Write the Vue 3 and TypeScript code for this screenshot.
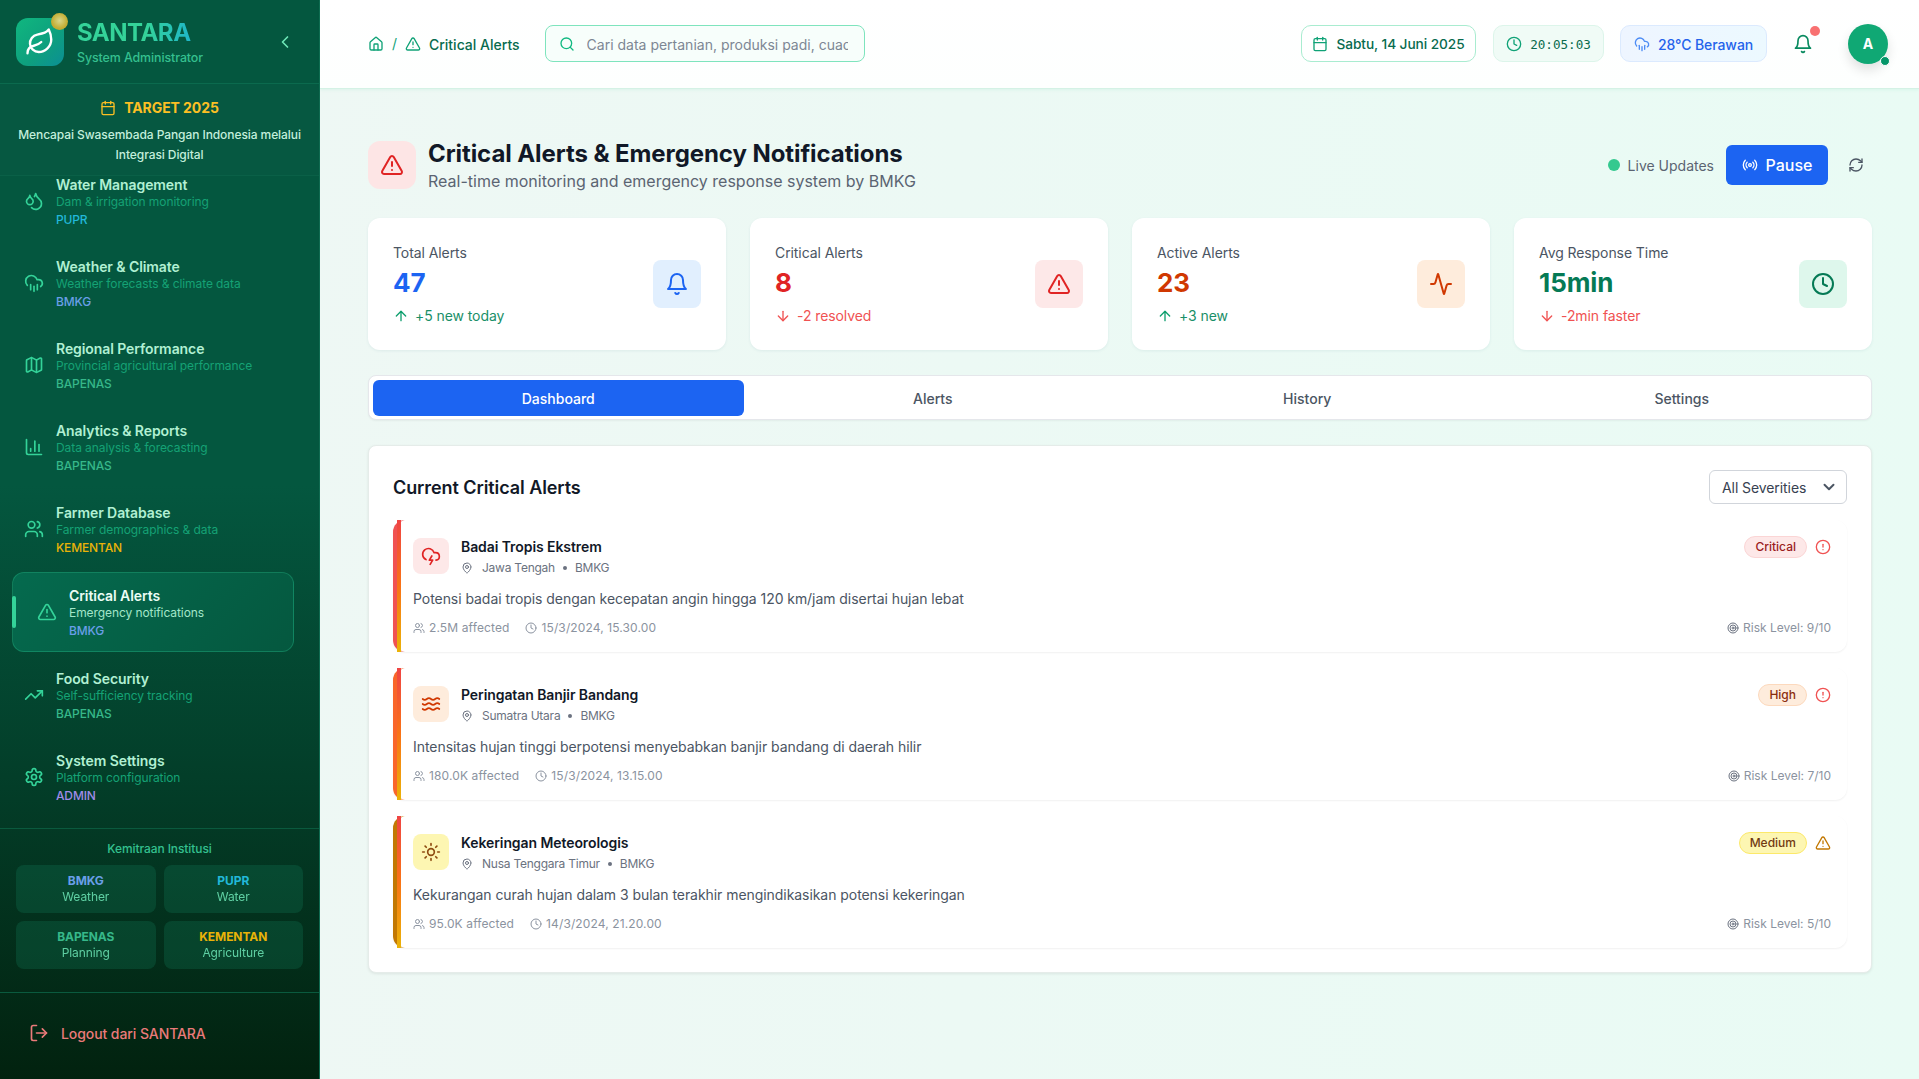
<script setup lang="ts">
const icons: Record<string, string> = {
  home: '<path d="M15 21v-8a1 1 0 0 0-1-1h-4a1 1 0 0 0-1 1v8"/><path d="M3 10a2 2 0 0 1 .709-1.528l7-5.999a2 2 0 0 1 2.582 0l7 5.999A2 2 0 0 1 21 10v9a2 2 0 0 1-2 2H5a2 2 0 0 1-2-2z"/>',
  alert: '<path d="m21.73 18-8-14a2 2 0 0 0-3.48 0l-8 14A2 2 0 0 0 4 21h16a2 2 0 0 0 1.73-3"/><path d="M12 9v4"/><path d="M12 17h.01"/>',
  search: '<circle cx="11" cy="11" r="8"/><path d="m21 21-4.3-4.3"/>',
  calendar: '<path d="M8 2v4"/><path d="M16 2v4"/><rect x="3" y="4" width="18" height="18" rx="2"/><path d="M3 10h18"/>',
  clock: '<circle cx="12" cy="12" r="10"/><polyline points="12 6 12 12 16 14"/>',
  rain: '<path d="M4 14.899A7 7 0 1 1 15.71 8h1.79a4.5 4.5 0 0 1 2.5 8.242"/><path d="M16 14v6"/><path d="M8 14v6"/><path d="M12 16v6"/>',
  bell: '<path d="M6 8a6 6 0 0 1 12 0c0 7 3 9 3 9H3s3-2 3-9"/><path d="M10.3 21a1.94 1.94 0 0 0 3.4 0"/>',
  radio: '<path d="M4.9 19.1C1 15.2 1 8.8 4.9 4.9"/><path d="M7.8 16.2c-2.3-2.3-2.3-6.1 0-8.5"/><circle cx="12" cy="12" r="2"/><path d="M16.2 7.8c2.3 2.3 2.3 6.1 0 8.5"/><path d="M19.1 4.9C23 8.8 23 15.1 19.1 19"/>',
  refresh: '<path d="M3 12a9 9 0 0 1 9-9 9.75 9.75 0 0 1 6.74 2.74L21 8"/><path d="M21 3v5h-5"/><path d="M21 12a9 9 0 0 1-9 9 9.75 9.75 0 0 1-6.74-2.74L3 16"/><path d="M8 16H3v5"/>',
  up: '<path d="m5 12 7-7 7 7"/><path d="M12 19V5"/>',
  down: '<path d="M12 5v14"/><path d="m19 12-7 7-7-7"/>',
  activity: '<path d="M22 12h-2.48a2 2 0 0 0-1.93 1.46l-2.35 8.36a.25.25 0 0 1-.48 0L9.24 2.18a.25.25 0 0 0-.48 0l-2.35 8.36A2 2 0 0 1 4.49 12H2"/>',
  leaf: '<path d="M11 20A7 7 0 0 1 9.8 6.1C15.5 5 17 4.48 19 2c1 2 2 4.18 2 8 0 5.5-4.78 10-10 10Z"/><path d="M2 21c0-3 1.85-5.36 5.08-6C9.5 14.52 12 13 13 12"/>',
  left: '<path d="m15 18-6-6 6-6"/>',
  chevron: '<path d="m6 9 6 6 6-6"/>',
  droplets: '<path d="M7 16.3c2.2 0 4-1.83 4-4.05 0-1.16-.57-2.26-1.71-3.19S7.29 6.75 7 5.3c-.29 1.45-1.14 2.84-2.29 3.76S3 11.1 3 12.25c0 2.22 1.8 4.05 4 4.05z"/><path d="M12.56 6.6A10.97 10.97 0 0 0 14 3.02c.5 2.5 2 4.9 4 6.5s3 3.5 3 5.5a6.98 6.98 0 0 1-11.91 4.97"/>',
  map: '<path d="M14.106 5.553a2 2 0 0 0 1.788 0l3.659-1.83A1 1 0 0 1 21 4.619v12.764a1 1 0 0 1-.553.894l-4.553 2.277a2 2 0 0 1-1.788 0l-4.212-2.106a2 2 0 0 0-1.788 0l-3.659 1.83A1 1 0 0 1 3 19.381V6.618a1 1 0 0 1 .553-.894l4.553-2.277a2 2 0 0 1 1.788 0z"/><path d="M15 5.764v15"/><path d="M9 3.236v15"/>',
  chart: '<path d="M3 3v16a2 2 0 0 0 2 2h16"/><path d="M18 17V9"/><path d="M13 17V5"/><path d="M8 17v-3"/>',
  users: '<path d="M16 21v-2a4 4 0 0 0-4-4H6a4 4 0 0 0-4 4v2"/><path d="M16 3.128a4 4 0 0 1 0 7.744"/><path d="M22 21v-2a4 4 0 0 0-3-3.87"/><circle cx="9" cy="7" r="4"/>',
  trending: '<polyline points="22 7 13.5 15.5 8.5 10.5 2 17"/><polyline points="16 7 22 7 22 13"/>',
  settings: '<path d="M12.22 2h-.44a2 2 0 0 0-2 2v.18a2 2 0 0 1-1 1.73l-.43.25a2 2 0 0 1-2 0l-.15-.08a2 2 0 0 0-2.73.73l-.22.38a2 2 0 0 0 .73 2.73l.15.1a2 2 0 0 1 1 1.72v.51a2 2 0 0 1-1 1.74l-.15.09a2 2 0 0 0-.73 2.73l.22.38a2 2 0 0 0 2.73.73l.15-.08a2 2 0 0 1 2 0l.43.25a2 2 0 0 1 1 1.73V20a2 2 0 0 0 2 2h.44a2 2 0 0 0 2-2v-.18a2 2 0 0 1 1-1.73l.43-.25a2 2 0 0 1 2 0l.15.08a2 2 0 0 0 2.73-.73l.22-.39a2 2 0 0 0-.73-2.73l-.15-.08a2 2 0 0 1-1-1.74v-.5a2 2 0 0 1 1-1.74l.15-.09a2 2 0 0 0 .73-2.73l-.22-.38a2 2 0 0 0-2.73-.73l-.15.08a2 2 0 0 1-2 0l-.43-.25a2 2 0 0 1-1-1.73V4a2 2 0 0 0-2-2z"/><circle cx="12" cy="12" r="3"/>',
  logout: '<path d="M9 21H5a2 2 0 0 1-2-2V5a2 2 0 0 1 2-2h4"/><polyline points="16 17 21 12 16 7"/><line x1="21" y1="12" x2="9" y2="12"/>',
  lightning: '<path d="M6 16.326A7 7 0 1 1 15.71 8h1.79a4.5 4.5 0 0 1 .5 8.973"/><path d="m13 12-3 5h4l-3 5"/>',
  waves: '<path d="M2 6c.6.5 1.2 1 2.5 1C7 7 7 5 9.5 5c2.6 0 2.4 2 5 2 2.5 0 2.5-2 5-2 1.3 0 1.9.5 2.5 1"/><path d="M2 12c.6.5 1.2 1 2.5 1 2.5 0 2.5-2 5-2 2.6 0 2.4 2 5 2 2.5 0 2.5-2 5-2 1.3 0 1.9.5 2.5 1"/><path d="M2 18c.6.5 1.2 1 2.5 1 2.5 0 2.5-2 5-2 2.6 0 2.4 2 5 2 2.5 0 2.5-2 5-2 1.3 0 1.9.5 2.5 1"/>',
  sun: '<circle cx="12" cy="12" r="4"/><path d="M12 2v2"/><path d="M12 20v2"/><path d="m4.93 4.93 1.41 1.41"/><path d="m17.66 17.66 1.41 1.41"/><path d="M2 12h2"/><path d="M20 12h2"/><path d="m6.34 17.66-1.41 1.41"/><path d="m19.07 4.93-1.41 1.41"/>',
  pin: '<path d="M20 10c0 4.993-5.539 10.193-7.399 11.799a1 1 0 0 1-1.202 0C9.539 20.193 4 14.993 4 10a8 8 0 0 1 16 0"/><circle cx="12" cy="10" r="3"/>',
  circleAlert: '<circle cx="12" cy="12" r="10"/><line x1="12" y1="8" x2="12" y2="12"/><line x1="12" y1="16" x2="12.01" y2="16"/>',
  target: '<circle cx="12" cy="12" r="10"/><circle cx="12" cy="12" r="6"/><circle cx="12" cy="12" r="2"/>',
}

const navItems = [
  { title: 'Water Management', sub: 'Dam & irrigation monitoring', tag: 'PUPR', icon: 'droplets', tone: 'cyan' },
  { title: 'Weather & Climate', sub: 'Weather forecasts & climate data', tag: 'BMKG', icon: 'rain', tone: 'blue' },
  { title: 'Regional Performance', sub: 'Provincial agricultural performance', tag: 'BAPENAS', icon: 'map', tone: 'green' },
  { title: 'Analytics & Reports', sub: 'Data analysis & forecasting', tag: 'BAPENAS', icon: 'chart', tone: 'green' },
  { title: 'Farmer Database', sub: 'Farmer demographics & data', tag: 'KEMENTAN', icon: 'users', tone: 'yellow' },
  { title: 'Critical Alerts', sub: 'Emergency notifications', tag: 'BMKG', icon: 'alert', tone: 'blue', active: true },
  { title: 'Food Security', sub: 'Self-sufficiency tracking', tag: 'BAPENAS', icon: 'trending', tone: 'green' },
  { title: 'System Settings', sub: 'Platform configuration', tag: 'ADMIN', icon: 'settings', tone: 'purple' },
]

const partners = [
  { name: 'BMKG', role: 'Weather', tone: 'blue' },
  { name: 'PUPR', role: 'Water', tone: 'cyan' },
  { name: 'BAPENAS', role: 'Planning', tone: 'green' },
  { name: 'KEMENTAN', role: 'Agriculture', tone: 'yellow' },
]

const stats = [
  { label: 'Total Alerts', value: '47', change: '+5 new today', dir: 'up', icon: 'bell', tone: 'blue' },
  { label: 'Critical Alerts', value: '8', change: '-2 resolved', dir: 'down', icon: 'alert', tone: 'red' },
  { label: 'Active Alerts', value: '23', change: '+3 new', dir: 'up', icon: 'activity', tone: 'orange' },
  { label: 'Avg Response Time', value: '15min', change: '-2min faster', dir: 'down', icon: 'clock', tone: 'green' },
]

const tabs = ['Dashboard', 'Alerts', 'History', 'Settings']

const alerts = [
  {
    title: 'Badai Tropis Ekstrem', place: 'Jawa Tengah', source: 'BMKG',
    text: 'Potensi badai tropis dengan kecepatan angin hingga 120 km/jam disertai hujan lebat',
    affected: '2.5M affected', time: '15/3/2024, 15.30.00', risk: 'Risk Level: 9/10',
    level: 'Critical', tone: 'red', icon: 'lightning', status: 'circleAlert',
  },
  {
    title: 'Peringatan Banjir Bandang', place: 'Sumatra Utara', source: 'BMKG',
    text: 'Intensitas hujan tinggi berpotensi menyebabkan banjir bandang di daerah hilir',
    affected: '180.0K affected', time: '15/3/2024, 13.15.00', risk: 'Risk Level: 7/10',
    level: 'High', tone: 'orange', icon: 'waves', status: 'circleAlert',
  },
  {
    title: 'Kekeringan Meteorologis', place: 'Nusa Tenggara Timur', source: 'BMKG',
    text: 'Kekurangan curah hujan dalam 3 bulan terakhir mengindikasikan potensi kekeringan',
    affected: '95.0K affected', time: '14/3/2024, 21.20.00', risk: 'Risk Level: 5/10',
    level: 'Medium', tone: 'yellow', icon: 'sun', status: 'alert',
  },
]
</script>

<template>
  <div class="app">
    <aside class="sidebar">
      <div class="brand">
        <div class="logo">
          <svg class="ic leaf" viewBox="0 0 24 24" v-html="icons.leaf"></svg>
          <span class="logo-dot"></span>
        </div>
        <div class="brand-text">
          <div class="brand-name">SANTARA</div>
          <div class="brand-role">System Administrator</div>
        </div>
        <svg class="ic collapse" viewBox="0 0 24 24" v-html="icons.left"></svg>
      </div>

      <div class="target">
        <div class="target-head">
          <svg class="ic" viewBox="0 0 24 24" v-html="icons.calendar"></svg>
          <span>TARGET 2025</span>
        </div>
        <p>Mencapai Swasembada Pangan Indonesia melalui Integrasi Digital</p>
      </div>

      <nav class="nav">
        <div class="nav-list">
          <a v-for="item in navItems" :key="item.title" class="nav-item" :class="{ active: item.active }">
            <span v-if="item.active" class="nav-bar"></span>
            <svg class="ic nav-icon" viewBox="0 0 24 24" v-html="icons[item.icon]"></svg>
            <span class="nav-text">
              <span class="nav-title">{{ item.title }}</span>
              <span class="nav-sub">{{ item.sub }}</span>
              <span class="nav-tag" :class="item.tone">{{ item.tag }}</span>
            </span>
          </a>
        </div>
      </nav>

      <div class="partners">
        <div class="partners-label">Kemitraan Institusi</div>
        <div class="partner-grid">
          <div v-for="p in partners" :key="p.name" class="partner">
            <span class="partner-name" :class="p.tone">{{ p.name }}</span>
            <span class="partner-role">{{ p.role }}</span>
          </div>
        </div>
      </div>

      <div class="logout">
        <svg class="ic" viewBox="0 0 24 24" v-html="icons.logout"></svg>
        <span>Logout dari SANTARA</span>
      </div>
    </aside>

    <div class="main">
      <header class="topbar">
        <div class="crumbs">
          <svg class="ic" viewBox="0 0 24 24" v-html="icons.home"></svg>
          <span class="slash">/</span>
          <svg class="ic" viewBox="0 0 24 24" v-html="icons.alert"></svg>
          <span class="crumb-now">Critical Alerts</span>
        </div>
        <div class="search">
          <svg class="ic" viewBox="0 0 24 24" v-html="icons.search"></svg>
          <input type="text" placeholder="Cari data pertanian, produksi padi, cuaca..." />
        </div>
        <div class="top-right">
          <div class="pill date">
            <svg class="ic" viewBox="0 0 24 24" v-html="icons.calendar"></svg>
            <span>Sabtu, 14 Juni 2025</span>
          </div>
          <div class="pill time">
            <svg class="ic" viewBox="0 0 24 24" v-html="icons.clock"></svg>
            <span>20:05:03</span>
          </div>
          <div class="pill weather">
            <svg class="ic" viewBox="0 0 24 24" v-html="icons.rain"></svg>
            <span>28°C Berawan</span>
          </div>
          <div class="bell">
            <svg class="ic" viewBox="0 0 24 24" v-html="icons.bell"></svg>
            <span class="bell-dot"></span>
          </div>
          <div class="avatar">A<span class="avatar-dot"></span></div>
        </div>
      </header>

      <main class="content">
        <section class="page-head">
          <div class="page-icon">
            <svg class="ic" viewBox="0 0 24 24" v-html="icons.alert"></svg>
          </div>
          <div class="page-title">
            <h1>Critical Alerts &amp; Emergency Notifications</h1>
            <p>Real-time monitoring and emergency response system by BMKG</p>
          </div>
          <div class="page-actions">
            <span class="live-dot"></span>
            <span class="live-label">Live Updates</span>
            <button class="pause">
              <svg class="ic" viewBox="0 0 24 24" v-html="icons.radio"></svg>
              Pause
            </button>
            <svg class="ic refresh" viewBox="0 0 24 24" v-html="icons.refresh"></svg>
          </div>
        </section>

        <section class="stats">
          <div v-for="s in stats" :key="s.label" class="stat">
            <div class="stat-body">
              <div class="stat-label">{{ s.label }}</div>
              <div class="stat-value" :class="s.tone">{{ s.value }}</div>
              <div class="stat-change" :class="s.dir">
                <svg class="ic" viewBox="0 0 24 24" v-html="icons[s.dir]"></svg>
                <span>{{ s.change }}</span>
              </div>
            </div>
            <div class="stat-icon" :class="s.tone">
              <svg class="ic" viewBox="0 0 24 24" v-html="icons[s.icon]"></svg>
            </div>
          </div>
        </section>

        <section class="tabs">
          <button v-for="(t, i) in tabs" :key="t" class="tab" :class="{ on: i === 0 }">{{ t }}</button>
        </section>

        <section class="panel">
          <div class="panel-head">
            <h2>Current Critical Alerts</h2>
            <div class="select">
              <span>All Severities</span>
              <svg class="ic" viewBox="0 0 24 24" v-html="icons.chevron"></svg>
            </div>
          </div>
          <div class="alert-list">
            <article v-for="a in alerts" :key="a.title" class="alert" :class="a.tone">
              <div class="alert-top">
                <div class="alert-icon">
                  <svg class="ic" viewBox="0 0 24 24" v-html="icons[a.icon]"></svg>
                </div>
                <div class="alert-head">
                  <h3>{{ a.title }}</h3>
                  <div class="alert-place">
                    <svg class="ic" viewBox="0 0 24 24" v-html="icons.pin"></svg>
                    <span>{{ a.place }}</span>
                    <span class="sep"></span>
                    <span>{{ a.source }}</span>
                  </div>
                </div>
                <div class="alert-level">
                  <span class="badge">{{ a.level }}</span>
                  <svg class="ic status" viewBox="0 0 24 24" v-html="icons[a.status]"></svg>
                </div>
              </div>
              <p class="alert-text">{{ a.text }}</p>
              <div class="alert-meta">
                <span class="meta">
                  <svg class="ic" viewBox="0 0 24 24" v-html="icons.users"></svg>{{ a.affected }}
                </span>
                <span class="meta">
                  <svg class="ic" viewBox="0 0 24 24" v-html="icons.clock"></svg>{{ a.time }}
                </span>
                <span class="meta risk">
                  <svg class="ic" viewBox="0 0 24 24" v-html="icons.target"></svg>{{ a.risk }}
                </span>
              </div>
            </article>
          </div>
        </section>
      </main>
    </div>
  </div>
</template>

<style>
html,
body {
  margin: 0;
  padding: 0;
}
</style>

<style scoped>
.app {
  display: flex;
  height: 1079px;
  overflow: hidden;
  font-family: Inter, "Noto Sans", sans-serif;
  letter-spacing: -0.005em;
  background: linear-gradient(90deg, #eff7f4, #e9fbf4);
}

.ic {
  width: 16px;
  height: 16px;
  flex: none;
  fill: none;
  stroke: currentColor;
  stroke-width: 2;
  stroke-linecap: round;
  stroke-linejoin: round;
}

/* sidebar */
.sidebar {
  width: 320px;
  flex: none;
  display: flex;
  flex-direction: column;
  height: 100%;
  box-sizing: border-box;
  border-right: 1px solid #0f6a50;
  background: linear-gradient(180deg, #04573f 0%, #04573f 45%, #033e29 72%, #02220f 100%);
}

.brand {
  height: 84px;
  box-sizing: border-box;
  display: flex;
  align-items: center;
  padding: 0 16px;
  gap: 13px;
  border-bottom: 1px solid #0b6a4e;
}

.logo {
  position: relative;
  width: 48px;
  height: 48px;
  border-radius: 12px;
  display: flex;
  align-items: center;
  justify-content: center;
  color: #fff;
  background: linear-gradient(135deg, #10b77f, #0e9f7e 60%, #0b8f96);
}

.leaf {
  width: 30px;
  height: 30px;
  stroke-width: 1.9;
}

.logo-dot {
  position: absolute;
  top: -5px;
  right: -4px;
  width: 17px;
  height: 17px;
  border-radius: 50%;
  background: radial-gradient(circle at 50% 45%, #d9d78a 0%, #c4ae35 60%, #b99f2b 100%);
}

.brand-text {
  flex: 1;
  margin-top: 1px;
}

.brand-name {
  font-size: 24px;
  line-height: 30px;
  font-weight: 700;
  letter-spacing: -0.5px;
  width: fit-content;
  background: linear-gradient(90deg, #34d399 60%, #1fb6c9);
  -webkit-background-clip: text;
  background-clip: text;
  color: transparent;
}

.brand-role {
  font-size: 12.4px;
  line-height: 18px;
  margin-top: 1px;
  font-weight: 500;
  color: #35c08f;
}

.collapse {
  width: 20px;
  height: 20px;
  color: #6ee7b7;
  margin-right: 8px;
}

.target {
  height: 92px;
  box-sizing: border-box;
  padding: 14px 16px 0;
  flex: none;
  text-align: center;
  border-bottom: 1px solid #0a6047;
  background: rgba(255, 255, 255, 0.012);
  position: relative;
  z-index: 1;
}

.target-head {
  display: flex;
  align-items: center;
  justify-content: center;
  gap: 8px;
  font-size: 14px;
  line-height: 20px;
  font-weight: 700;
  color: #fbbf24;
}

.target p {
  margin: 7px 0 0;
  font-size: 12px;
  line-height: 20px;
  font-weight: 500;
  color: #c3efdc;
}

.nav {
  flex: 1;
  min-height: 0;
  overflow: hidden;
}

.nav-list {
  margin-top: -14px;
  padding: 0 12px;
  display: flex;
  flex-direction: column;
  gap: 4px;
}

.nav-item {
  position: relative;
  display: flex;
  align-items: center;
  gap: 12px;
  height: 78px;
  box-sizing: border-box;
  padding: 0 12px;
}

.nav-item.active {
  height: 80px;
  width: 282px;
  padding-left: 24px;
  border: 1px solid rgba(52, 211, 153, 0.28);
  border-radius: 12px;
  background: linear-gradient(135deg, #056a4e, #05583f);
}

.nav-bar {
  position: absolute;
  left: -1px;
  top: 23px;
  width: 4px;
  height: 32px;
  border-radius: 2px;
  background: #34d399;
}

.nav-icon {
  width: 20px;
  height: 20px;
  color: #34d399;
}

.nav-text {
  display: flex;
  flex-direction: column;
}

.nav-title {
  font-size: 14px;
  line-height: 20px;
  font-weight: 600;
  color: #b1f0d3;
}

.active .nav-title {
  color: #ecfdf5;
}

.nav-sub {
  margin-top: -1px;
  font-size: 12px;
  line-height: 16px;
  color: #15a275;
}

.active .nav-sub {
  color: #a3e6c9;
}

.nav-tag {
  margin-top: 2px;
  font-size: 12px;
  line-height: 16px;
  font-weight: 500;
  letter-spacing: -0.012em;
}

.cyan { color: #22b8d9; }
.blue { color: #6a9fe8; }
.green { color: #36b88a; }
.yellow { color: #eab308; }
.purple { color: #a08be8; }

.partners {
  flex: none;
  height: 165px;
  box-sizing: border-box;
  padding: 12px 16px 0;
  border-top: 1px solid #0a5a3e;
  border-bottom: 1px solid #0a5a3e;
}

.partners-label {
  font-size: 12px;
  line-height: 16px;
  font-weight: 500;
  text-align: center;
  color: #34c08f;
}

.partner-grid {
  display: grid;
  grid-template-columns: 1fr 1fr;
  gap: 8px;
  margin-top: 8px;
}

.partner {
  height: 48px;
  border-radius: 8px;
  background: rgba(16, 120, 85, 0.3);
  display: flex;
  flex-direction: column;
  align-items: center;
  justify-content: center;
}

.partner-name {
  font-size: 12px;
  line-height: 16px;
  font-weight: 700;
}

.partner-role {
  font-size: 12px;
  line-height: 16px;
  color: #6ee7b7;
  opacity: 0.85;
}

.logout {
  flex: none;
  height: 86px;
  box-sizing: border-box;
  display: flex;
  align-items: center;
  gap: 12px;
  padding: 0 0 6px 29px;
  font-size: 14px;
  font-weight: 500;
  color: #ea7a7a;
}

.logout .ic {
  width: 20px;
  height: 20px;
}

/* main */
.main {
  flex: 1;
  min-width: 0;
  display: flex;
  flex-direction: column;
}

.topbar {
  height: 89px;
  box-sizing: border-box;
  flex: none;
  display: flex;
  align-items: center;
  padding: 0 31px 1px 48px;
  background: linear-gradient(180deg, #fff, #fdfffe);
  border-bottom: 1px solid #d4f2e5;
  box-shadow: 0 1px 3px rgba(16, 185, 129, 0.08);
}

.crumbs {
  display: flex;
  align-items: center;
  color: #10a277;
  font-size: 14px;
}

.slash {
  margin: 0 8px;
  color: #10a277;
}

.crumb-now {
  margin-left: 8px;
  font-weight: 500;
  color: #086b4e;
  letter-spacing: 0;
  padding-top: 1px;
}

.search {
  margin-left: 25px;
  width: 320px;
  height: 37px;
  box-sizing: border-box;
  display: flex;
  align-items: center;
  gap: 12px;
  padding: 0 16px 0 13px;
  border: 1px solid #7ee4bd;
  border-radius: 8px;
  background: #f7fefb;
  color: #10b981;
}

.search input {
  flex: 1;
  min-width: 0;
  border: 0;
  outline: 0;
  padding: 1px 0 0;
  background: none;
  font: inherit;
  font-size: 14px;
  letter-spacing: 0;
}

.search input::placeholder {
  color: #7d8794;
}

.top-right {
  margin-left: auto;
  display: flex;
  align-items: center;
  gap: 16px;
}

.pill {
  height: 37px;
  box-sizing: border-box;
  display: flex;
  align-items: center;
  justify-content: center;
  gap: 8px;
  border-radius: 10px;
  font-size: 14px;
}

.pill span {
  padding-top: 1px;
}

.date {
  width: 175px;
  border: 1px solid #a9ecd0;
  background: #fff;
  color: #086b4e;
  font-size: 13.7px;
  font-weight: 500;
}

.date .ic,
.time .ic {
  color: #10a277;
}

.time {
  width: 111px;
  margin-left: 1px;
  border: 1px solid #dcf5ea;
  background: #f0fbf6;
  color: #086b4e;
  font-family: "DejaVu Sans Mono", monospace;
  font-size: 12.6px;
  letter-spacing: 0;
}

.weather {
  width: 147px;
  border: 1px solid #dbeafe;
  background: linear-gradient(90deg, #eef5ff, #ecf9ff);
  color: #2463eb;
  font-weight: 500;
}

.weather .ic {
  color: #4d8cf5;
}

.bell {
  position: relative;
  width: 20px;
  height: 20px;
  margin-left: 10px;
  color: #088a5f;
}

.bell .ic {
  width: 20px;
  height: 20px;
}

.bell-dot {
  position: absolute;
  top: -8px;
  right: -7px;
  width: 10px;
  height: 10px;
  border-radius: 50%;
  background: #f87171;
}

.avatar {
  position: relative;
  width: 40px;
  height: 40px;
  margin-left: 19px;
  border-radius: 50%;
  background: #10a874;
  color: #fff;
  font-size: 14px;
  font-weight: 700;
  display: flex;
  align-items: center;
  justify-content: center;
  box-shadow: 0 6px 12px rgba(0, 0, 0, 0.12);
}

.avatar-dot {
  position: absolute;
  right: -2px;
  bottom: -2px;
  width: 8px;
  height: 8px;
  border-radius: 50%;
  border: 1px solid #fff;
  background: #059669;
}

.content {
  padding: 52px 47px 0 48px;
}

.page-head {
  display: flex;
  align-items: center;
  height: 48px;
}

.page-icon {
  width: 48px;
  height: 48px;
  flex: none;
  border-radius: 12px;
  background: #fde5e5;
  color: #e02424;
  display: flex;
  align-items: center;
  justify-content: center;
}

.page-icon .ic {
  width: 24px;
  height: 24px;
}

.page-title {
  margin: 2px 0 0 12px;
}

.page-title h1 {
  margin: 0;
  font-size: 24px;
  line-height: 30px;
  font-weight: 700;
  color: #111827;
}

.page-title p {
  margin: 0;
  font-size: 16px;
  line-height: 24px;
  letter-spacing: 0;
  color: #5b6472;
}

.page-actions {
  margin-left: auto;
  display: flex;
  align-items: center;
}

.live-dot {
  width: 12px;
  height: 12px;
  border-radius: 50%;
  background: #34c98f;
}

.live-label {
  margin-left: 8px;
  font-size: 14px;
  letter-spacing: 0;
  color: #5b6472;
}

.pause {
  margin-left: 12px;
  width: 102px;
  height: 40px;
  border: 0;
  border-radius: 6px;
  background: #1c64f2;
  color: #fff;
  font: inherit;
  font-size: 16px;
  font-weight: 500;
  display: flex;
  align-items: center;
  justify-content: center;
  gap: 8px;
}

.refresh {
  margin-left: 20px;
  margin-right: 8px;
  color: #4b5563;
}

.stats {
  display: grid;
  grid-template-columns: repeat(4, 1fr);
  gap: 24px;
  margin-top: 29px;
}

.stat {
  height: 132px;
  box-sizing: border-box;
  padding: 0 25px;
  display: flex;
  align-items: center;
  justify-content: space-between;
  background: #fff;
  border-radius: 12px;
  box-shadow: 0 1px 3px rgba(30, 90, 120, 0.08);
}

.stat-label {
  font-size: 14px;
  line-height: 20px;
  color: #4b5563;
}

.stat-value {
  font-size: 26px;
  line-height: 32px;
  margin-top: 4px;
  font-weight: 700;
}

.stat-value.blue { color: #1c64f2; }
.stat-value.red { color: #e02424; }
.stat-value.orange { color: #d03801; }
.stat-value.green { color: #057a55; }

.stat-change {
  display: flex;
  align-items: center;
  gap: 6px;
  margin-top: 7px;
  font-size: 14px;
  line-height: 20px;
}

.stat-change.up { color: #0e9f6e; }
.stat-change.down { color: #f05252; }

.stat-change.up span { color: #1a8f68; }

.stat-icon {
  width: 48px;
  height: 48px;
  border-radius: 8px;
  display: flex;
  align-items: center;
  justify-content: center;
}

.stat-icon .ic {
  width: 24px;
  height: 24px;
}

.stat-icon.blue { background: #e1effe; color: #1c64f2; }
.stat-icon.red { background: #fde8e8; color: #e02424; }
.stat-icon.orange { background: #feecdc; color: #d03801; }
.stat-icon.green { background: #def7ec; color: #057a55; }

.tabs {
  display: grid;
  grid-template-columns: repeat(4, 1fr);
  margin-top: 25px;
  height: 45px;
  box-sizing: border-box;
  padding: 3px 2px 2px;
  background: #fff;
  border-radius: 8px;
  border: 1px solid #e5e7eb;
  box-shadow: 0 1px 2px rgba(0, 0, 0, 0.05);
}

.tab {
  margin: 1px 2px;
  padding: 1px 0 0;
  border: 0;
  background: none;
  border-radius: 6px;
  font: inherit;
  font-size: 14px;
  font-weight: 500;
  letter-spacing: 0;
  color: #4b5563;
}

.tab.on {
  background: #1c64f2;
  color: #fff;
}

.panel {
  margin-top: 25px;
  height: 528px;
  box-sizing: border-box;
  padding: 24px;
  background: #fff;
  border-radius: 8px;
  border: 1px solid #e5ece9;
  box-shadow: 0 1px 3px rgba(0, 0, 0, 0.08);
}

.panel-head {
  display: flex;
  align-items: center;
  justify-content: space-between;
  height: 34px;
  margin-bottom: 16px;
}

.panel-head h2 {
  margin: 0;
  font-size: 18px;
  font-weight: 600;
  color: #111827;
}

.select {
  width: 138px;
  height: 34px;
  box-sizing: border-box;
  display: flex;
  align-items: center;
  justify-content: space-between;
  padding: 0 8px 0 12px;
  border: 1px solid #d1d5db;
  border-radius: 6px;
  font-size: 14px;
  color: #374151;
}

.select .ic {
  width: 18px;
  height: 18px;
  stroke-width: 2.6;
  color: #4b5563;
}

.alert-list {
  display: flex;
  flex-direction: column;
  gap: 16px;
}

.alert {
  position: relative;
  height: 132px;
  box-sizing: border-box;
  padding: 18px 16px 0 16px;
  border-radius: 12px;
  border-left: 4px solid;
  background: #fff;
  box-shadow: 0 1px 2px rgba(0, 0, 0, 0.06);
}

.alert::before {
  content: "";
  position: absolute;
  left: 0;
  top: 0;
  bottom: 0;
  width: 4px;
  background: linear-gradient(180deg, #ef4444, #f97316 50%, #eab308);
}

.alert.red { border-left-color: #f05252; }
.alert.orange { border-left-color: #f9662a; }
.alert.yellow { border-left-color: #c27803; }

.alert-top {
  display: flex;
}

.alert-icon {
  width: 36px;
  height: 36px;
  border-radius: 8px;
  display: flex;
  align-items: center;
  justify-content: center;
}

.alert-icon .ic {
  width: 20px;
  height: 20px;
}

.red .alert-icon { background: #fde8e8; color: #e02424; }
.orange .alert-icon { background: #feecdc; color: #d03801; }
.yellow .alert-icon { background: #fdf6b2; color: #8e4b10; }

.alert-head {
  margin-left: 12px;
  margin-top: -1px;
}

.alert-head h3 {
  margin: 0;
  font-size: 14px;
  line-height: 20px;
  font-weight: 600;
  color: #111827;
}

.alert-place {
  display: flex;
  align-items: center;
  margin-top: 3px;
  font-size: 12px;
  line-height: 16px;
  letter-spacing: -0.02em;
  color: #6b7280;
}

.alert-place .ic {
  width: 12px;
  height: 12px;
  margin-right: 9px;
}

.sep {
  width: 4px;
  height: 4px;
  margin: 0 8px;
  border-radius: 50%;
  background: #6b7280;
}

.alert-level {
  margin-left: auto;
  display: flex;
  align-items: center;
  align-self: flex-start;
  gap: 8px;
  margin-top: -2px;
}

.badge {
  height: 22px;
  box-sizing: border-box;
  display: flex;
  align-items: center;
  padding: 0 10px 1px;
  border-radius: 999px;
  border: 1px solid;
  font-size: 12px;
  font-weight: 500;
  letter-spacing: 0;
}

.red .badge { background: #fde8e8; border-color: #fbd5d5; color: #9b1c1c; }
.orange .badge { background: #feecdc; border-color: #fcd9bd; color: #8a2c0d; }
.yellow .badge { background: #fdf6b2; border-color: #fce96a; color: #723b13; }

.red .status,
.orange .status { color: #f05252; }
.yellow .status { color: #c27803; }

.alert-text {
  margin: 13px 0 0;
  font-size: 14px;
  line-height: 20px;
  letter-spacing: -0.004em;
  color: #4b5563;
}

.alert-meta {
  display: flex;
  align-items: center;
  gap: 16px;
  margin-top: 11px;
  font-size: 12px;
  line-height: 16px;
  letter-spacing: 0.01em;
  color: #8b93a0;
}

.meta {
  display: flex;
  align-items: center;
  gap: 3px;
}

.meta .ic {
  width: 12px;
  height: 12px;
  margin-right: 1px;
}

.risk {
  margin-left: auto;
  letter-spacing: 0;
}

.risk .ic {
  color: #6b7280;
}
</style>
